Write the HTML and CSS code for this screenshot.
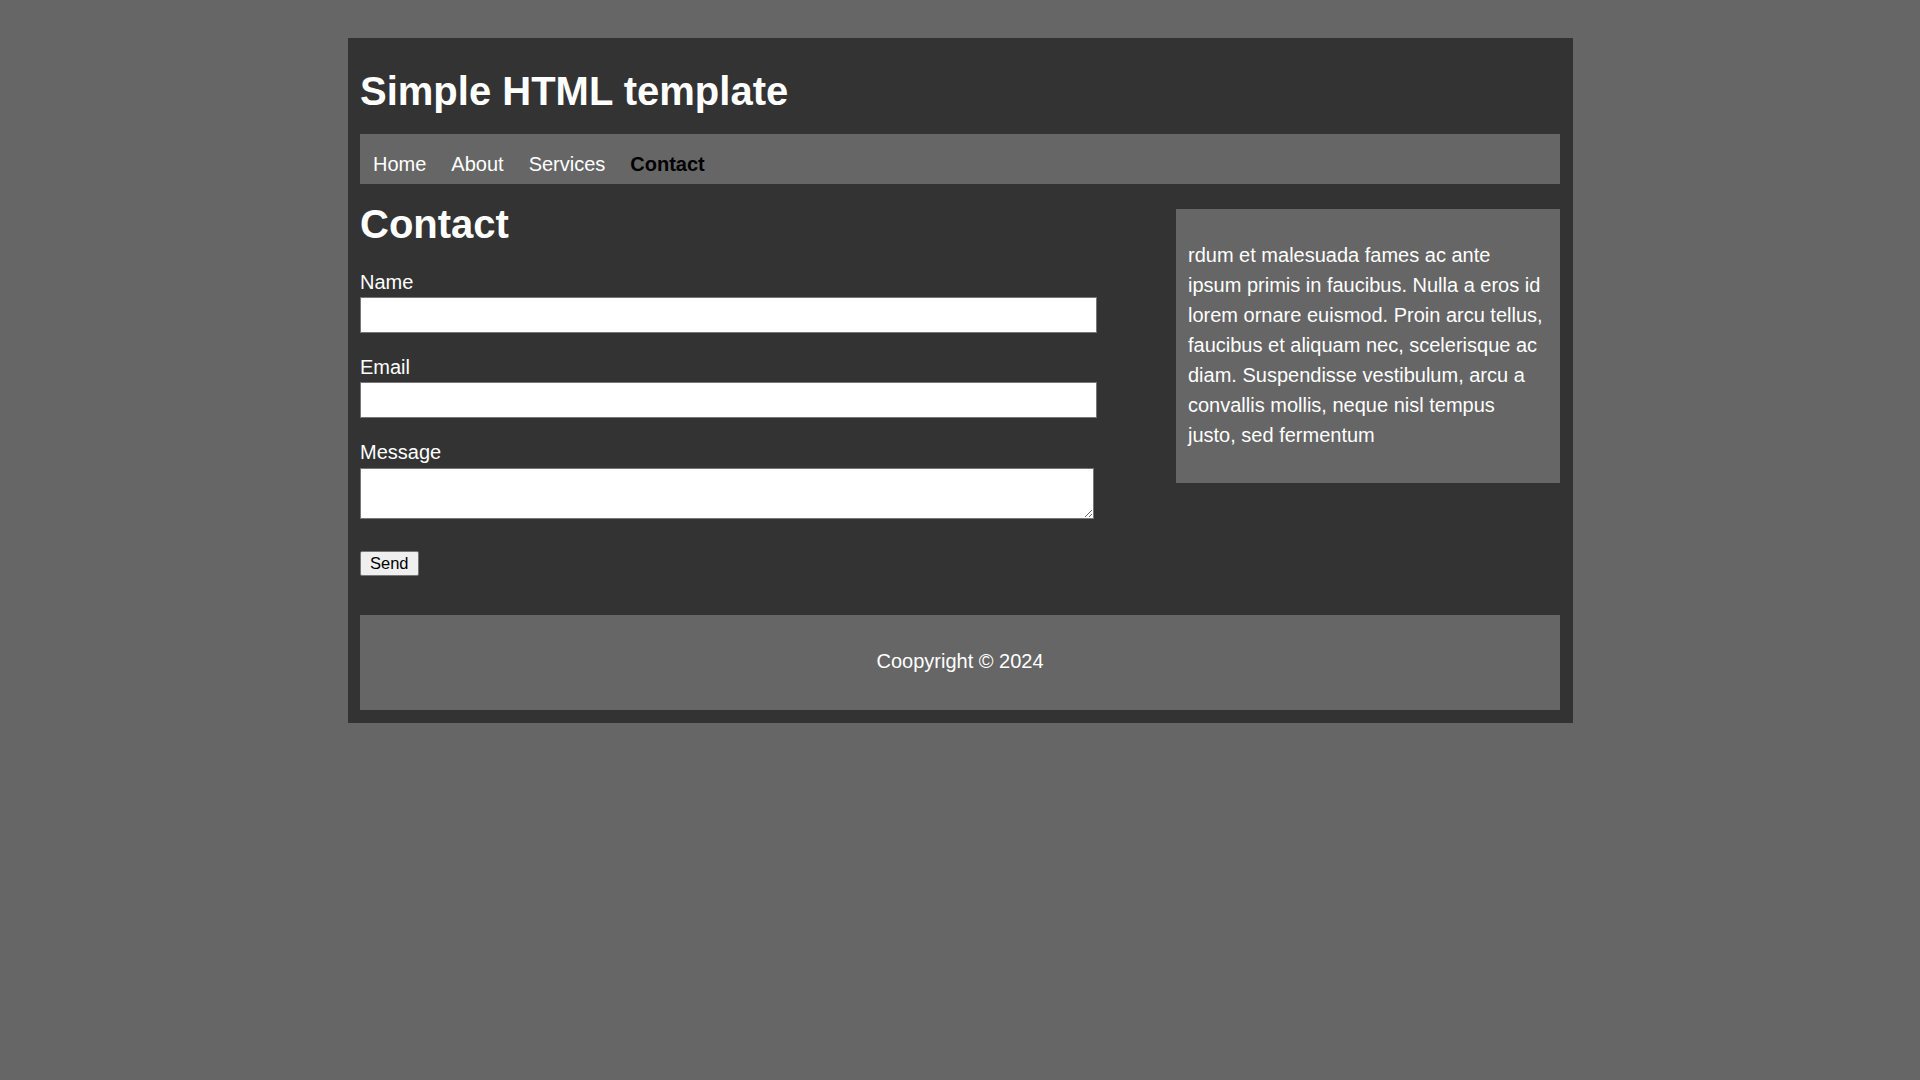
FILE: index.html
```html
<!DOCTYPE html>
<html lang="en">
<head>
<meta charset="utf-8">
<title>Simple HTML template</title>
<link rel="stylesheet" href="styles.css">
</head>
<body>
<div class="container">
  <header class="header">
    <h1 class="title">Simple HTML template</h1>
  </header>
  <nav class="nav">
    <a href="#" class="nav-link">Home</a>
    <a href="#" class="nav-link">About</a>
    <a href="#" class="nav-link">Services</a>
    <a href="#" class="nav-link active">Contact</a>
  </nav>
  <div class="content">
    <main class="main">
      <h2 class="page-title">Contact</h2>
      <form class="form">
        <div class="field">
          <label class="label" for="name">Name</label>
          <input class="input" type="text" id="name">
        </div>
        <div class="field">
          <label class="label" for="email">Email</label>
          <input class="input" type="email" id="email">
        </div>
        <div class="field field-last">
          <label class="label" for="message">Message</label>
          <textarea class="textarea" id="message"></textarea>
        </div>
        <div class="actions">
          <button class="btn" type="button">Send</button>
        </div>
      </form>
    </main>
    <aside class="aside">
      <p class="aside-text">rdum et malesuada fames ac ante ipsum primis in faucibus. Nulla a eros id lorem ornare euismod. Proin arcu tellus, faucibus et aliquam nec, scelerisque ac diam. Suspendisse vestibulum, arcu a convallis mollis, neque nisl tempus justo, sed fermentum</p>
    </aside>
  </div>
  <footer class="footer">
    <p class="footer-text">Coopyright © 2024</p>
  </footer>
</div>
</body>
</html>
```

FILE: styles.css
```css
* {
  box-sizing: border-box;
}

html, body {
  margin: 0;
  padding: 0;
}

body {
  background: #666666;
  color: #ffffff;
  font-family: "Liberation Sans", Arial, sans-serif;
  font-size: 20px;
  line-height: 23px;
}

.container {
  width: 1225px;
  margin: 38px 0 0 calc(50% - 612px);
  padding: 12px 13px 13px 12px;
  background: #333333;
}

.title {
  margin: 18px 0 20px;
  font-size: 40px;
  line-height: 46px;
  font-weight: bold;
  color: #ffffff;
}

.nav {
  display: flex;
  gap: 25px;
  height: 50px;
  padding: 19px 13px 8px;
  background: #666666;
}

.nav-link {
  color: #ffffff;
  text-decoration: none;
  font-size: 20px;
  line-height: 23px;
}

.nav-link.active {
  color: #000000;
  font-weight: bold;
}

.content {
  display: flex;
  align-items: flex-start;
  justify-content: space-between;
}

.main {
  width: 737px;
}

.page-title {
  margin: 17px 0 24px;
  font-size: 40px;
  line-height: 46px;
  font-weight: bold;
}

.form {
  margin: 0;
}

.field {
  margin-bottom: 23px;
}

.label {
  display: block;
  margin-bottom: 3px;
  line-height: 23px;
}

.field-last .label {
  margin-bottom: 4px;
}

.input {
  display: block;
  width: 737px;
  height: 36px;
  margin: 0;
  padding: 0 8px;
  border: 1px solid #767676;
  background: #ffffff;
  font-family: "Liberation Sans", Arial, sans-serif;
  font-size: 16px;
}

.textarea {
  display: block;
  width: 734px;
  height: 51px;
  margin: 0;
  padding: 4px 8px;
  border: 1px solid #767676;
  background: #ffffff;
  font-family: "Liberation Sans", Arial, sans-serif;
  font-size: 16px;
}

.actions {
  display: flex;
  padding-top: 9px;
}

.btn {
  height: 25px;
  padding: 2px 9px;
  border: 1px solid #767676;
  border-radius: 2px;
  background: #efefef;
  color: #000000;
  font-family: "Liberation Sans", Arial, sans-serif;
  font-size: 16.5px;
  line-height: 19px;
}

.aside {
  width: 384px;
  margin-top: 25px;
  padding: 12px;
  background: #666666;
}

.aside-text {
  margin: 19px 0 21px;
  line-height: 30px;
}

.footer {
  margin-top: 39px;
  padding: 35px 0 37px;
  background: #666666;
  text-align: center;
}

.footer-text {
  margin: 0;
  line-height: 23px;
}
```
